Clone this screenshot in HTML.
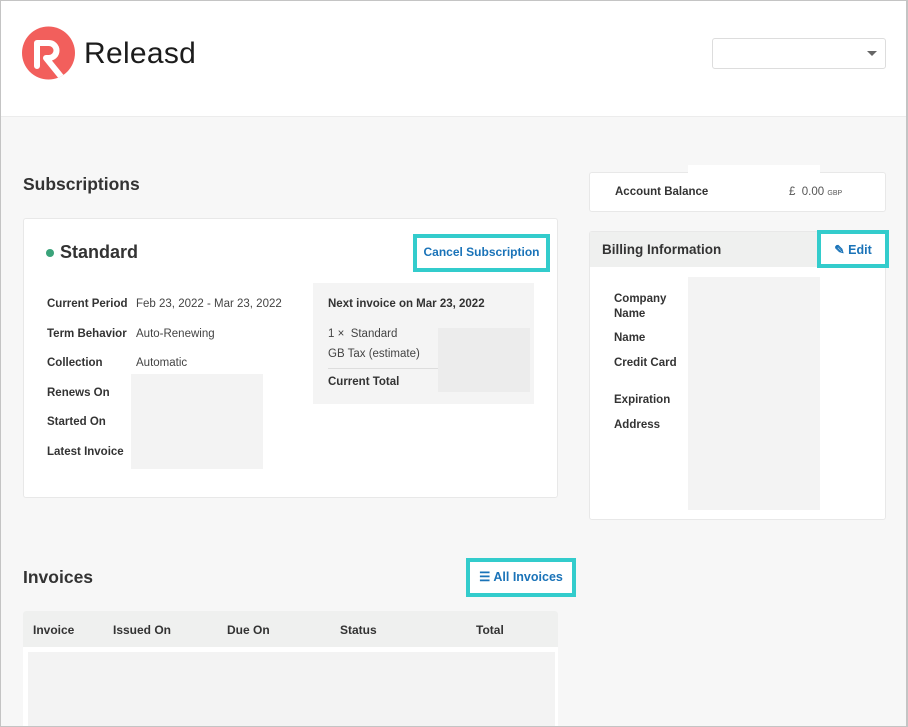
<!DOCTYPE html>
<html><head><meta charset="utf-8"><style>
*{margin:0;padding:0;box-sizing:border-box}
body{width:908px;height:727px;overflow:hidden;background:#f7f7f7;font-family:"Liberation Sans",sans-serif;color:#333;position:relative}
.frame{position:absolute;left:0;top:0;width:908px;height:727px;border:1px solid #c4c4c4;border-right:2px solid #c4c4c4;pointer-events:none;z-index:10}
.hdr{position:absolute;left:0;top:0;width:908px;height:117px;background:#fff;border-bottom:1px solid #ececec}
.abs{position:absolute}
.card{position:absolute;background:#fff;border:1px solid #e8e8e8;border-radius:3px}
.lbl{position:absolute;font-size:11.5px;font-weight:bold;color:#333}
.val{position:absolute;font-size:11.5px;color:#444}
.ph{position:absolute;background:#f3f3f3}
.hl{position:absolute;border:4px solid #33cccc;background:#fff}
.blue{color:#1a73b8;font-weight:bold}
</style></head><body>
<div class="hdr">
<svg class="abs" style="left:21px;top:26px" width="56" height="56" viewBox="0 0 56 56">
<defs><clipPath id="c"><circle cx="27.5" cy="27" r="26.5"/></clipPath></defs>
<circle cx="27.5" cy="27" r="26.5" fill="#f25f5c"/>
<g clip-path="url(#c)" fill="none" stroke="#fff" stroke-width="6" stroke-linecap="round" stroke-linejoin="round">
<path d="M16 40 V17 H28 a7.5 7.5 0 0 1 0 15 H25 L46 58"/>
</g>
</svg>
<div class="abs" style="left:84px;top:37px;font-size:30px;color:#1c1c1c;letter-spacing:0.3px">Releasd</div>
<div class="abs" style="left:712px;top:38px;width:174px;height:31px;border:1px solid #ddd;border-radius:3px;background:#fff"></div>
<div class="abs" style="left:867px;top:51px;width:0;height:0;border-left:5px solid transparent;border-right:5px solid transparent;border-top:5px solid #666"></div>
</div>

<div class="abs" style="left:23px;top:174px;font-size:17.5px;font-weight:bold;color:#333">Subscriptions</div>
<div class="card" style="left:23px;top:218px;width:535px;height:280px"></div>
<div class="abs" style="left:46px;top:249px;width:8px;height:8px;border-radius:50%;background:#3aa37a"></div>
<div class="abs" style="left:60px;top:242px;font-size:18px;font-weight:bold;color:#333">Standard</div>
<div class="hl" style="left:413px;top:234px;width:137px;height:38px"></div>
<div class="abs blue" style="left:413px;top:245px;width:137px;text-align:center;font-size:12px">Cancel Subscription</div>

<div class="lbl" style="left:47px;top:298px">Current Period</div>
<div class="val" style="left:136px;top:298px">Feb 23, 2022 - Mar 23, 2022</div>
<div class="lbl" style="left:47px;top:328px">Term Behavior</div>
<div class="val" style="left:136px;top:328px">Auto-Renewing</div>
<div class="lbl" style="left:47px;top:357px">Collection</div>
<div class="val" style="left:136px;top:357px">Automatic</div>
<div class="lbl" style="left:47px;top:387px">Renews On</div>
<div class="lbl" style="left:47px;top:416px">Started On</div>
<div class="lbl" style="left:47px;top:446px">Latest Invoice</div>
<div class="ph" style="left:131px;top:374px;width:132px;height:95px"></div>

<div class="ph" style="left:313px;top:283px;width:221px;height:121px;background:#f4f4f4"></div>
<div class="lbl" style="left:328px;top:298px">Next invoice on Mar 23, 2022</div>
<div class="val" style="left:328px;top:328px">1 ×&nbsp; Standard</div>
<div class="val" style="left:328px;top:348px">GB Tax (estimate)</div>
<div class="abs" style="left:328px;top:368px;width:110px;height:1px;background:#ddd"></div>
<div class="lbl" style="left:328px;top:376px">Current Total</div>
<div class="ph" style="left:438px;top:328px;width:92px;height:64px;background:#ececec"></div>

<div class="card" style="left:589px;top:172px;width:297px;height:40px"></div>
<div class="abs" style="left:688px;top:165px;width:132px;height:10px;background:#fff"></div>
<div class="lbl" style="left:615px;top:186px">Account Balance</div>
<div class="val" style="left:789px;top:186px;color:#555">£ &nbsp;0.00 <span style="font-size:7px">GBP</span></div>

<div class="card" style="left:589px;top:231px;width:297px;height:289px"></div>
<div class="abs" style="left:590px;top:232px;width:295px;height:35px;background:#eff0ef"></div>
<div class="abs" style="left:602px;top:242px;font-size:13.5px;font-weight:bold;color:#333">Billing Information</div>
<div class="hl" style="left:817px;top:230px;width:72px;height:38px"></div>
<div class="abs blue" style="left:817px;top:242px;width:72px;text-align:center;font-size:12.5px">&#9998; Edit</div>
<div class="ph" style="left:688px;top:277px;width:132px;height:233px"></div>
<div class="lbl" style="left:614px;top:292px;line-height:15px">Company<br>Name</div>
<div class="lbl" style="left:614px;top:332px">Name</div>
<div class="lbl" style="left:614px;top:357px">Credit Card</div>
<div class="lbl" style="left:614px;top:394px">Expiration</div>
<div class="lbl" style="left:614px;top:419px">Address</div>

<div class="abs" style="left:23px;top:567px;font-size:17.5px;font-weight:bold;color:#333">Invoices</div>
<div class="hl" style="left:466px;top:558px;width:110px;height:39px"></div>
<div class="abs blue" style="left:466px;top:569px;width:110px;text-align:center;font-size:12.5px">&#9776; All Invoices</div>
<div class="abs" style="left:23px;top:611px;width:535px;height:116px;background:#fff;border-radius:3px 3px 0 0"></div>
<div class="abs" style="left:23px;top:611px;width:535px;height:36px;background:#eff0ef;border-radius:3px 3px 0 0"></div>
<div class="lbl" style="left:33px;top:623px;font-size:12px">Invoice</div>
<div class="lbl" style="left:113px;top:623px;font-size:12px">Issued On</div>
<div class="lbl" style="left:227px;top:623px;font-size:12px">Due On</div>
<div class="lbl" style="left:340px;top:623px;font-size:12px">Status</div>
<div class="lbl" style="left:476px;top:623px;font-size:12px">Total</div>
<div class="ph" style="left:28px;top:652px;width:527px;height:75px"></div>
<div class="frame"></div>
</body></html>
